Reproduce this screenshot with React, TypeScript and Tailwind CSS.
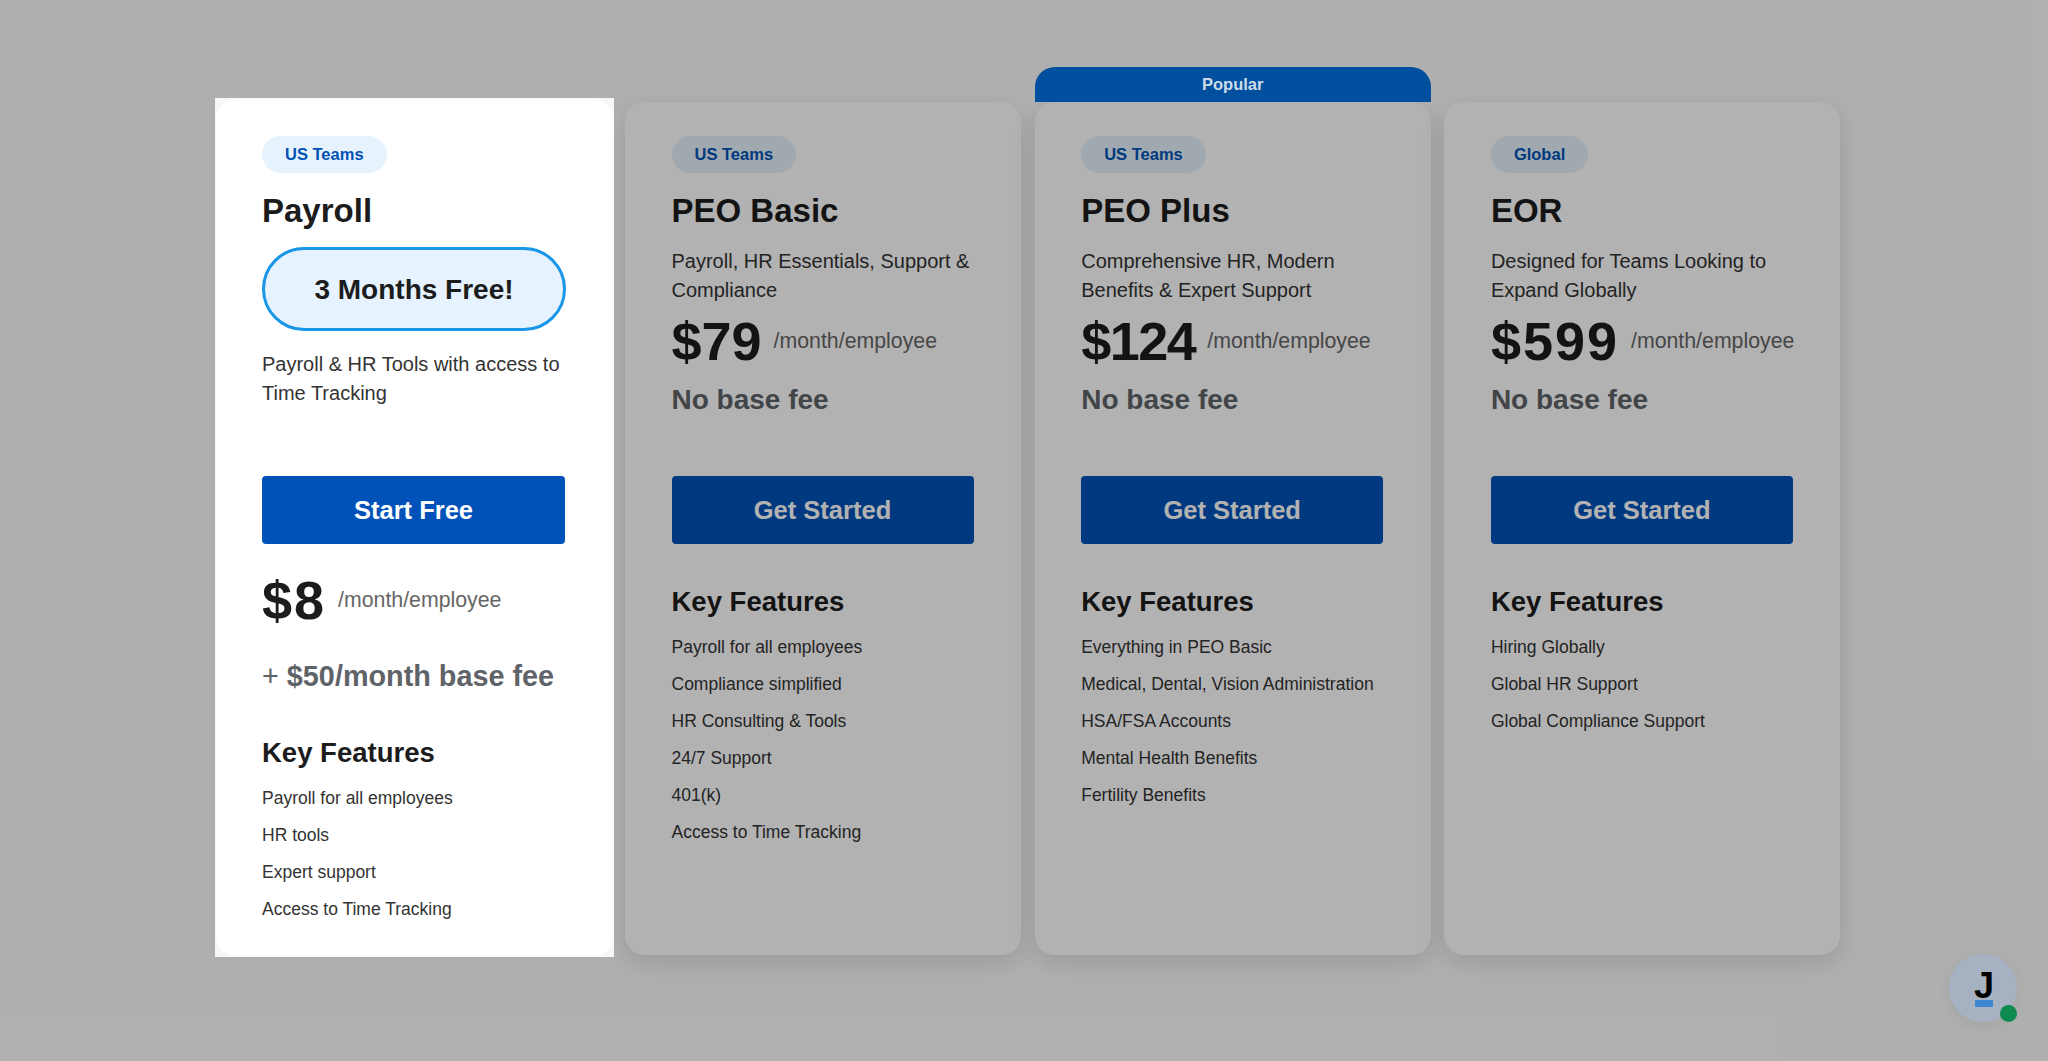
const plans = [
  {
    tag: 'US Teams',
    name: 'PEO Basic',
    desc: 'Payroll, HR Essentials, Support & Compliance',
    price: '$79',
    priceClass: 'tracking-normal',
    features: [
      'Payroll for all employees',
      'Compliance simplified',
      'HR Consulting & Tools',
      '24/7 Support',
      '401(k)',
      'Access to Time Tracking',
    ],
  },
  {
    tag: 'US Teams',
    name: 'PEO Plus',
    desc: 'Comprehensive HR, Modern Benefits & Expert Support',
    price: '$124',
    priceClass: 'tracking-[-1.5px]',
    popular: true,
    features: [
      'Everything in PEO Basic',
      'Medical, Dental, Vision Administration',
      'HSA/FSA Accounts',
      'Mental Health Benefits',
      'Fertility Benefits',
    ],
  },
  {
    tag: 'Global',
    name: 'EOR',
    desc: 'Designed for Teams Looking to Expand Globally',
    price: '$599',
    priceClass: 'tracking-[2px]',
    features: ['Hiring Globally', 'Global HR Support', 'Global Compliance Support'],
  },
];

const payrollFeatures = ['Payroll for all employees', 'HR tools', 'Expert support', 'Access to Time Tracking'];

const Tag = ({ label }: { label: string }) => (
  <span className="inline-flex h-[37px] items-center rounded-full bg-[#e6f2fd] px-[23px] text-[16.5px] font-bold text-[#0052b4]">
    {label}
  </span>
);

const Price = ({ value, className }: { value: string; className: string }) => (
  <div className="flex h-[60px] items-center gap-[12px]">
    <span className={`text-[54px] leading-[60px] font-bold text-[#1c1c1c] ${className}`}>{value}</span>
    <span className="text-[21.3px] leading-[28px] text-[#666666]">/month/employee</span>
  </div>
);

const Features = ({ items, className }: { items: string[]; className: string }) => (
  <div className={className}>
    <h3 className="text-[27.5px] leading-[36px] font-bold text-[#1c1c1c]">Key Features</h3>
    <ul className="mt-[9px]">
      {items.map((item) => (
        <li key={item} className="text-[17.5px] leading-[37px] text-[#333333]">
          {item}
        </li>
      ))}
    </ul>
  </div>
);

export default function App() {
  return (
    <div className="relative h-[1061px] w-[2048px] overflow-hidden bg-[#fbfbfb] font-['Liberation_Sans',Arial,sans-serif]">
      <div className="flex h-full items-start pt-[102px] pl-[215px]">
        <div className="relative z-20 mt-[-4px] mr-[11px] w-[399px] bg-[#f7f7f7] p-px">
          <div className="h-[857px] rounded-[20px] bg-white px-[46px] pt-[37px]">
            <Tag label="US Teams" />
            <h2 className="mt-[18px] text-[33px] leading-[40px] font-bold text-[#1c1c1c]">Payroll</h2>
            <div className="mt-[16px] flex h-[84px] w-[304px] items-center justify-center rounded-full border-[3px] border-[#1a96e8] bg-[#e6f2fd] pt-[2px] text-[28px] font-bold text-[#1c1c1c]">
              3 Months Free!
            </div>
            <p className="mt-[19px] h-[126px] text-[20px] leading-[28.5px] text-[#333333]">
              Payroll &amp; HR Tools with access to Time Tracking
            </p>
            <button className="block h-[68px] w-[303px] rounded-[4px] bg-[#0052b8] text-[25.5px] font-bold text-white">
              Start Free
            </button>
            <div className="mt-[26px]">
              <Price value="$8" className="tracking-[2px]" />
            </div>
            <p className="mt-[28px] text-[28.8px] leading-[36px] font-bold text-[#5f6368]">
              <span className="font-normal">+</span> $50/month base fee
            </p>
            <Features items={payrollFeatures} className="mt-[41px]" />
          </div>
        </div>

        <div className="flex gap-[13.7px]">
          {plans.map((plan) => (
            <div
              key={plan.name}
              className="relative h-[853px] w-[396px] rounded-[20px] bg-white px-[46.5px] pt-[34px] shadow-[0_8px_24px_rgba(0,0,0,0.12)]"
            >
              {plan.popular && (
                <div className="absolute top-[-35px] left-0 z-20 flex h-[35px] w-full items-center justify-center rounded-t-[20px] bg-[#00509f] text-[16.5px] font-bold text-[#cddbe9]">
                  Popular
                </div>
              )}
              <Tag label={plan.tag} />
              <h2 className="mt-[18px] text-[33px] leading-[40px] font-bold text-[#1c1c1c]">{plan.name}</h2>
              <p className="mt-[16px] text-[20px] leading-[28.5px] text-[#333333]">{plan.desc}</p>
              <div className="mt-[7px]">
                <Price value={plan.price} className={plan.priceClass} />
              </div>
              <p className="mt-[11px] h-[94px] text-[28px] leading-[36px] font-bold text-[#5f6368]">No base fee</p>
              <button className="block h-[68px] w-[302px] rounded-[4px] bg-[#0052b8] text-[25.5px] font-bold text-white">
                Get Started
              </button>
              <Features items={plan.features} className="mt-[40px]" />
            </div>
          ))}
        </div>
      </div>

      <div className="absolute inset-0 z-10 bg-black/30" />

      {/* chat launcher */}
      <div className="absolute top-[954px] left-[1949px] z-20 flex h-[68px] w-[68px] items-center justify-center rounded-full bg-[#a6b2c2] shadow-[0_4px_16px_rgba(0,0,0,0.06)]">
        <div className="flex flex-col items-center pt-[2px] pl-[2px]">
          <span className="text-[36px] leading-[27px] font-bold text-black">J</span>
          <span className="mt-[1px] h-[7px] w-[18px] bg-[#3f87d0]" />
        </div>
        <span className="absolute top-[51px] left-[51px] h-[17px] w-[17px] rounded-full bg-[#0f8a50]" />
      </div>
    </div>
  );
}
